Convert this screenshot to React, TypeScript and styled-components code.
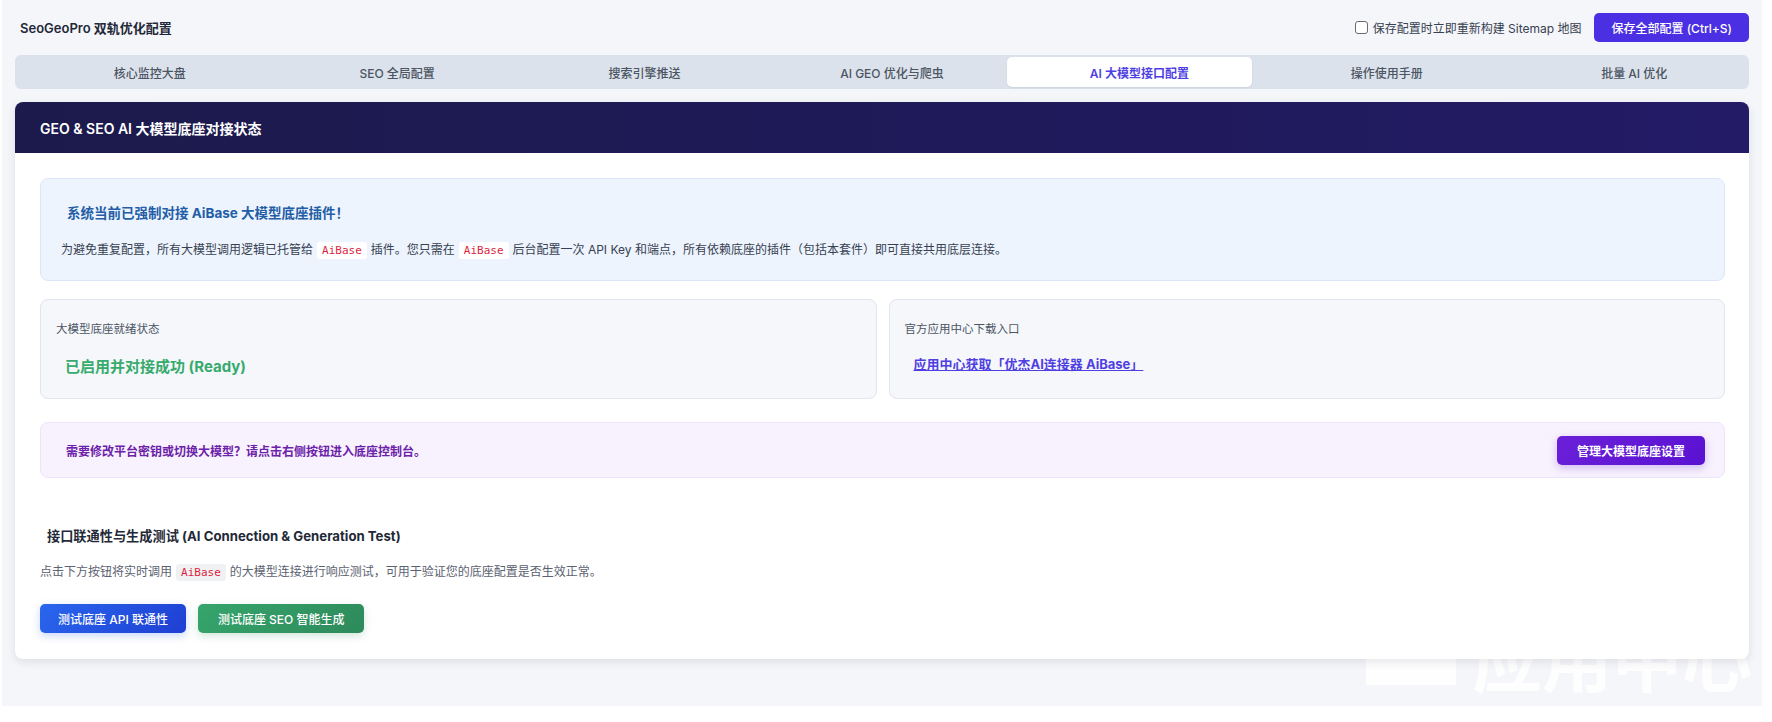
import React from 'react';
import styled, { createGlobalStyle, css } from 'styled-components';

const GlobalStyle = createGlobalStyle`
  html, body {
    margin: 0;
    padding: 0;
    background: #ffffff;
  }
  body {
    font-family: Inter, "Noto Sans CJK SC", "Noto Sans", sans-serif;
    color: #1f2937;
    -webkit-font-smoothing: antialiased;
  }
  * {
    box-sizing: border-box;
  }
`;

const Page = styled.div`
  position: relative;
  width: 1760px;
  height: 706px;
  margin-left: 2px;
  padding: 13px 13px 0;
  background: #f5f6fa;
  overflow: hidden;
`;

/* 背景水印 */
const Watermark = styled.div`
  position: absolute;
  top: 622px;
  right: 10px;
  display: flex;
  align-items: flex-start;
  gap: 16px;
  z-index: 0;
  pointer-events: none;
`;

const WatermarkMark = styled.span`
  width: 90px;
  height: 60px;
  margin-top: 3px;
  background: rgba(255, 255, 255, 0.9);
`;

const WatermarkText = styled.span`
  font-family: "Noto Sans CJK SC", sans-serif;
  font-size: 70px;
  line-height: 1;
  font-weight: 700;
  color: rgba(255, 255, 255, 0.9);
`;

const TopBar = styled.div`
  display: flex;
  align-items: center;
  justify-content: space-between;
  height: 29px;
`;

const AppTitle = styled.div`
  padding-left: 5px;
  font-size: 13px;
  font-weight: 600;
  color: #1f2937;
`;

const TopActions = styled.div`
  display: flex;
  align-items: center;
  gap: 13px;
`;

const CheckLabel = styled.label`
  display: flex;
  align-items: center;
  gap: 5px;
  font-size: 12px;
  color: #374151;
`;

const CheckBox = styled.input`
  appearance: none;
  width: 13px;
  height: 13px;
  margin: 0;
  border: 1px solid #6b6b6b;
  border-radius: 3px;
  background: #ffffff;
`;

const SaveButton = styled.button`
  height: 29px;
  padding: 0 17px;
  border: none;
  border-radius: 5px;
  background: #4b2fe2;
  color: #ffffff;
  font-family: inherit;
  font-size: 12px;
  font-weight: 500;
`;

const TabBar = styled.div`
  display: flex;
  gap: 2px;
  margin-top: 13px;
  padding: 2px;
  border-radius: 6px;
  background: #dce2eb;
`;

const Tab = styled.div<{ $active?: boolean }>`
  flex: 1;
  display: flex;
  align-items: center;
  justify-content: center;
  height: 30px;
  padding-left: 20px;
  border-radius: 5px;
  font-size: 12px;
  font-weight: 500;
  color: #4b5563;

  ${(p) =>
    p.$active &&
    css`
      background: #ffffff;
      color: #4f3fe3;
      font-weight: 600;
      box-shadow: 0 1px 2px rgba(15, 23, 42, 0.08);
    `}
`;

const Card = styled.div`
  position: relative;
  z-index: 1;
  margin-top: 13px;
  border-radius: 8px;
  background: #ffffff;
  box-shadow: 0 3px 10px rgba(15, 23, 42, 0.1);
  overflow: hidden;
`;

const CardHeader = styled.div`
  display: flex;
  align-items: center;
  height: 51px;
  padding: 0 25px;
  background: linear-gradient(90deg, #1c1a4c 0%, #1f1a58 50%, #231b66 100%);
  color: #ffffff;
  font-size: 14px;
  font-weight: 600;
`;

const CardBody = styled.div`
  padding: 25px 24px 26px 25px;
`;

const InfoBox = styled.div`
  padding: 24px 20px 19px;
  border: 1px solid #dbe7f8;
  border-radius: 8px;
  background: #edf4fe;
`;

const InfoTitle = styled.div`
  margin-left: 6px;
  font-size: 13.5px;
  line-height: 20px;
  font-weight: 700;
  color: #235da6;
`;

const InfoText = styled.div`
  margin-top: 17px;
  font-size: 12px;
  line-height: 20px;
  color: #374151;
`;

const Code = styled.code<{ $muted?: boolean }>`
  margin: 0 4px;
  padding: 2px 5px;
  border-radius: 3px;
  background: ${(p) => (p.$muted ? '#f0f1f3' : '#ffffff')};
  color: #dc1f3e;
  font-family: "DejaVu Sans Mono", "Liberation Mono", monospace;
  font-size: 11px;
`;

const StatusGrid = styled.div`
  display: grid;
  grid-template-columns: 1fr 1fr;
  gap: 12px;
  margin-top: 18px;
`;

const StatusCard = styled.div`
  height: 100px;
  padding: 20px 15px;
  border: 1px solid #e1e5ee;
  border-radius: 8px;
  background: #f6f7fb;
`;

const StatusLabel = styled.div`
  font-size: 11.5px;
  line-height: 18px;
  color: #4b5563;
`;

const StatusValue = styled.div`
  margin: 18px 0 0 9px;
  font-size: 15px;
  line-height: 22px;
  font-weight: 700;
  color: #36ab6d;
`;

const StatusLink = styled.a`
  display: inline-block;
  margin: 15px 0 0 9px;
  font-size: 13px;
  line-height: 22px;
  font-weight: 700;
  color: #4f3fe3;
  text-decoration: underline;
`;

const NoticeBox = styled.div`
  display: flex;
  align-items: center;
  justify-content: space-between;
  height: 56px;
  margin-top: 23px;
  padding: 0 19px 0 25px;
  border: 1px solid #efe3fc;
  border-radius: 8px;
  background: #f8f2fe;
`;

const NoticeText = styled.div`
  font-size: 12px;
  font-weight: 700;
  color: #6b21a8;
`;

type Variant = 'purple' | 'blue' | 'green';

const gradients: Record<Variant, string> = {
  purple: 'linear-gradient(135deg, #6b1fd8 0%, #5a12d2 100%)',
  blue: 'linear-gradient(135deg, #2a66ee 0%, #1e3fd2 100%)',
  green: 'linear-gradient(135deg, #36a56c 0%, #2e8a5b 100%)',
};

const shadows: Record<Variant, string> = {
  purple: '0 3px 8px rgba(91, 18, 210, 0.25)',
  blue: '0 3px 8px rgba(37, 99, 235, 0.25)',
  green: '0 3px 8px rgba(46, 138, 91, 0.22)',
};

const paddings: Record<Variant, string> = {
  purple: '0 20px',
  blue: '0 18px',
  green: '0 20px',
};

const ActionButton = styled.button<{ $variant: Variant }>`
  height: 29px;
  padding: ${(p) => paddings[p.$variant]};
  border: none;
  border-radius: 5px;
  background: ${(p) => gradients[p.$variant]};
  box-shadow: ${(p) => shadows[p.$variant]};
  color: #ffffff;
  font-family: inherit;
  font-size: 12px;
  font-weight: ${(p) => (p.$variant === 'purple' ? 600 : 500)};
`;

const SectionTitle = styled.div`
  margin-top: 48px;
  padding-left: 7px;
  font-size: 13.2px;
  line-height: 20px;
  font-weight: 700;
  color: #1f2937;
`;

const SectionDesc = styled.div`
  margin-top: 16px;
  font-size: 12px;
  line-height: 20px;
  color: #5b6270;
`;

const ButtonRow = styled.div`
  display: flex;
  gap: 12px;
  margin-top: 21px;
`;

const tabs = [
  '核心监控大盘',
  'SEO 全局配置',
  '搜索引擎推送',
  'AI GEO 优化与爬虫',
  'AI 大模型接口配置',
  '操作使用手册',
  '批量 AI 优化',
];

export default function App() {
  const activeTab = 4;

  return (
    <>
      <GlobalStyle />
      <Page>
        <Watermark>
          <WatermarkMark />
          <WatermarkText>应用中心</WatermarkText>
        </Watermark>

        <TopBar>
          <AppTitle>SeoGeoPro 双轨优化配置</AppTitle>
          <TopActions>
            <CheckLabel>
              <CheckBox type="checkbox" />
              保存配置时立即重新构建 Sitemap 地图
            </CheckLabel>
            <SaveButton>保存全部配置 (Ctrl+S)</SaveButton>
          </TopActions>
        </TopBar>

        <TabBar>
          {tabs.map((t, i) => (
            <Tab key={t} $active={i === activeTab}>
              {t}
            </Tab>
          ))}
        </TabBar>

        <Card>
          <CardHeader>GEO &amp; SEO AI 大模型底座对接状态</CardHeader>
          <CardBody>
            <InfoBox>
              <InfoTitle>系统当前已强制对接 AiBase 大模型底座插件！</InfoTitle>
              <InfoText>
                为避免重复配置，所有大模型调用逻辑已托管给<Code>AiBase</Code>插件。您只需在
                <Code>AiBase</Code>后台配置一次 API Key 和端点，所有依赖底座的插件（包括本套件）即可直接共用底层连接。
              </InfoText>
            </InfoBox>

            <StatusGrid>
              <StatusCard>
                <StatusLabel>大模型底座就绪状态</StatusLabel>
                <StatusValue>已启用并对接成功 (Ready)</StatusValue>
              </StatusCard>
              <StatusCard>
                <StatusLabel>官方应用中心下载入口</StatusLabel>
                <StatusLink href="#">应用中心获取「优杰AI连接器 AiBase」</StatusLink>
              </StatusCard>
            </StatusGrid>

            <NoticeBox>
              <NoticeText>需要修改平台密钥或切换大模型？请点击右侧按钮进入底座控制台。</NoticeText>
              <ActionButton $variant="purple">管理大模型底座设置</ActionButton>
            </NoticeBox>

            <SectionTitle>接口联通性与生成测试 (AI Connection &amp; Generation Test)</SectionTitle>
            <SectionDesc>
              点击下方按钮将实时调用<Code $muted>AiBase</Code>的大模型连接进行响应测试，可用于验证您的底座配置是否生效正常。
            </SectionDesc>

            <ButtonRow>
              <ActionButton $variant="blue">测试底座 API 联通性</ActionButton>
              <ActionButton $variant="green">测试底座 SEO 智能生成</ActionButton>
            </ButtonRow>
          </CardBody>
        </Card>
      </Page>
    </>
  );
}
